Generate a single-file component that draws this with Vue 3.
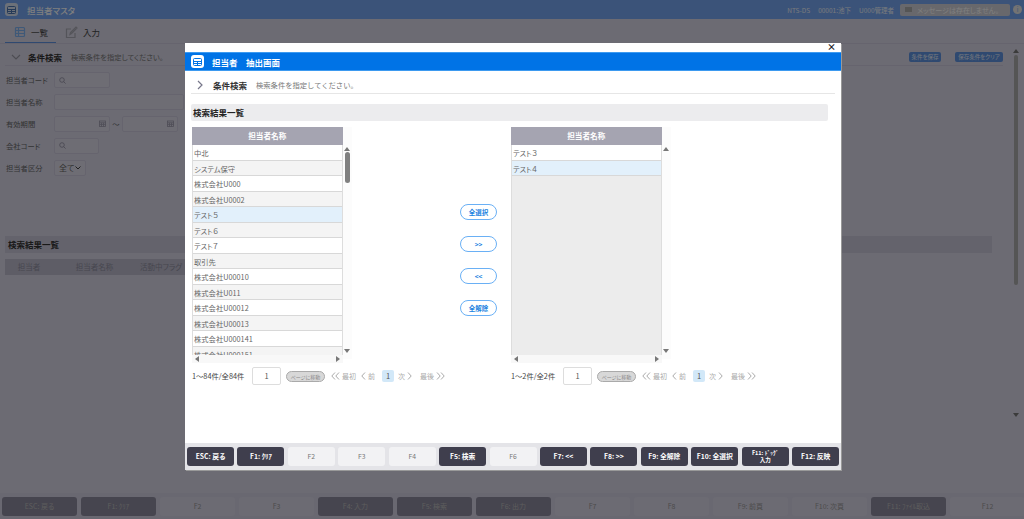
<script setup>
const formRows = [
  { label: '担当者コード', type: 'search', width: 56 },
  { label: '担当者名称', type: 'text', width: 130 },
  { label: '有効期間', type: 'date' },
  { label: '会社コード', type: 'search', width: 45 },
  { label: '担当者区分', type: 'select' }
]

const pageKeys = [
  { label: 'ESC: 戻る', on: true },
  { label: 'F1: ｸﾘｱ', on: true },
  { label: 'F2' },
  { label: 'F3' },
  { label: 'F4: 入力', on: true },
  { label: 'F5: 検索', on: true },
  { label: 'F6: 出力', on: true },
  { label: 'F7' },
  { label: 'F8' },
  { label: 'F9: 前頁' },
  { label: 'F10: 次頁' },
  { label: 'F11: ﾌｧｲﾙ取込', on: true },
  { label: 'F12' }
]

const modalKeys = [
  { label: 'ESC: 戻る', on: true },
  { label: 'F1: ｸﾘｱ', on: true },
  { label: 'F2' },
  { label: 'F3' },
  { label: 'F4' },
  { label: 'F5: 検索', on: true },
  { label: 'F6' },
  { label: 'F7: <<', on: true },
  { label: 'F8: >>', on: true },
  { label: 'F9: 全解除', on: true },
  { label: 'F10: 全選択', on: true },
  { label: 'F11: ﾄﾞｯｸﾞ\n入力', on: true, small: true },
  { label: 'F12: 反映', on: true }
]

const leftRows = [
  '中北', 'システム保守', '株式会社U000', '株式会社U0002', 'テスト５', 'テスト６', 'テスト７', '取引先',
  '株式会社U00010', '株式会社U011', '株式会社U00012', '株式会社U00013', '株式会社U000141', '株式会社U000151'
]
const rightRows = ['テスト３', 'テスト４']
const moveButtons = ['全選択', '>>', '<<', '全解除']
const lists = [
  { rows: leftRows, selected: 'テスト５', count: '1～84件/全84件', thumb: true },
  { rows: rightRows, selected: 'テスト４', count: '1～2件/全2件', thumb: false }
]
</script>

<template>
  <div class="screen">
    <!-- 背面の画面 -->
    <div class="page">
      <header class="top-bar">
        <span class="app-icon dim">
          <svg width="9" height="8" viewBox="0 0 9 8" fill="none" stroke="#4a74b0">
            <rect x="0.5" y="0.5" width="8" height="7" rx="1" />
            <path d="M0.5 3.500h8M0.5 5.500h8M4.500 3.500v4" />
          </svg>
        </span>
        <span class="top-title">担当者マスタ</span>
        <span class="top-info first">NTS-DS</span>
        <span class="top-info">00001:池下</span>
        <span class="top-info">U000管理者</span>
        <span class="message-box"><i class="msg-mark"></i>メッセージは存在しません。</span>
        <span class="info-dot">i</span>
      </header>

      <nav class="tabs">
        <span class="tab active">
          <svg width="12" height="12" viewBox="0 0 12 12" fill="none" stroke="#7fb2f0" stroke-width="1.2">
            <rect x="1.500" y="1.500" width="9" height="9" rx="1" />
            <path d="M4.500 1.500v9M1.500 4.500h9M1.500 7.500h9" />
          </svg>
          一覧
        </span>
        <span class="tab">
          <svg width="13" height="13" viewBox="0 0 13 13" fill="none" stroke="#a9a9b4" stroke-width="1.2">
            <path d="M10 7v4.500H1.500V3H6" />
            <path d="M5 8.500l.5-2L11 1l1 1-5.500 5.500z" />
          </svg>
          入力
        </span>
      </nav>

      <div class="main-area">
        <div class="cond-head">
          <svg width="10" height="6" viewBox="0 0 10 6" fill="none" stroke="#9a9aa6" stroke-width="1.100">
            <path d="M1 1l4 4 4-4" />
          </svg>
          <b>条件検索</b>
          <span class="cond-note">検索条件を指定してください。</span>
          <span class="save-btn first">条件を保存</span>
          <span class="save-btn wide">保存条件をクリア</span>
        </div>

        <div class="form">
          <div v-for="row in formRows" :key="row.label" class="form-row">
            <label>{{ row.label }}</label>
            <template v-if="row.type === 'date'">
              <span v-for="n in 2" :key="n" class="date-wrap">
                <span v-if="n === 2" class="tilde">～</span>
                <span class="field date">
                  <svg width="7" height="7" viewBox="0 0 7 7" fill="none" stroke="#9c9aac" stroke-width="0.800">
                    <rect x="0.500" y="1" width="6" height="5.500" />
                    <path d="M0.500 2.800h6M2.500 2.800v3.700M4.500 2.800v3.700M0.500 4.600h6" />
                  </svg>
                </span>
              </span>
            </template>
            <span v-else-if="row.type === 'select'" class="field select">
              全て
              <svg width="6" height="4" viewBox="0 0 6 4" fill="none" stroke="#444" stroke-width="1">
                <path d="M0.500 0.500L3 3l2.500-2.500" />
              </svg>
            </span>
            <span v-else class="field search" :style="{ width: row.width + 'px' }">
              <svg v-if="row.type === 'search'" width="7" height="7" viewBox="0 0 7 7" fill="none" stroke="#8e8ca0" stroke-width="0.800">
                <circle cx="3" cy="3" r="2.300" />
                <path d="M4.700 4.700L6.600 6.600" />
              </svg>
            </span>
          </div>
        </div>

        <div class="result-head">検索結果一覧</div>
        <div class="result-cols">
          <span style="width: 48px">担当者</span>
          <span style="width: 83px">担当者名称</span>
          <span style="width: 50px">活動中フラグ</span>
        </div>

        <div class="page-scroll">
          <i class="tri-up"></i>
          <i class="page-thumb"></i>
          <i class="tri-down"></i>
        </div>
      </div>

      <footer class="page-keys">
        <span
          v-for="key in pageKeys"
          :key="key.label"
          class="page-key"
          :class="{ on: key.on }"
        >{{ key.label }}</span>
      </footer>
    </div>

    <div class="overlay"></div>

    <!-- 抽出画面 -->
    <section class="modal">
      <div class="modal-close"><span>×</span></div>
      <div class="modal-title">
        <span class="app-icon">
          <svg width="9" height="8" viewBox="0 0 9 8" fill="none" stroke="#0073e6">
            <rect x="0.500" y="0.500" width="8" height="7" rx="1" />
            <path d="M0.500 3.500h8M0.500 5.500h8M4.500 3.500v4" />
          </svg>
        </span>
        担当者　抽出画面
      </div>

      <div class="modal-body">
        <div class="modal-cond">
          <svg width="6" height="10" viewBox="0 0 6 10" fill="none" stroke="#77778a" stroke-width="1.200">
            <path d="M1 1l4 4-4 4" />
          </svg>
          <b>条件検索</b>
          <span>検索条件を指定してください。</span>
        </div>

        <div class="modal-section">検索結果一覧</div>

        <div class="columns">
          <template v-for="(list, i) in lists" :key="i">
            <div class="list-col">
              <div class="list-wrap">
                <div class="list-main">
                  <div class="list-head">担当者名称</div>
                  <div class="list-rows">
                    <div
                      v-for="row in list.rows"
                      :key="row"
                      class="list-row"
                      :class="{ selected: row === list.selected }"
                    >{{ row }}</div>
                  </div>
                  <div class="hbar"><i class="tri-left"></i><i class="tri-right"></i></div>
                </div>
                <div class="vbar">
                  <i class="tri-up"></i>
                  <i v-if="list.thumb" class="thumb"></i>
                  <i class="tri-down"></i>
                </div>
              </div>
              <div class="pager">
                <span class="count">{{ list.count }}</span>
                <span class="page-input">1</span>
                <span class="page-go">ページに移動</span>
                <span class="page-link">
                  <svg width="9" height="8" viewBox="0 0 9 8" fill="none" stroke="#aaa"><path d="M4 .5L.8 4 4 7.500M8 .5L4.800 4 8 7.500" /></svg>
                  最初
                </span>
                <span class="page-link">
                  <svg width="5" height="8" viewBox="0 0 5 8" fill="none" stroke="#aaa"><path d="M4 .5L.8 4 4 7.500" /></svg>
                  前
                </span>
                <span class="page-now">1</span>
                <span class="page-link">
                  次
                  <svg width="5" height="8" viewBox="0 0 5 8" fill="none" stroke="#aaa"><path d="M1 .5L4.200 4 1 7.500" /></svg>
                </span>
                <span class="page-link last">
                  最後
                  <svg width="9" height="8" viewBox="0 0 9 8" fill="none" stroke="#aaa"><path d="M1 .5L4.200 4 1 7.500M5 .5L8.200 4 5 7.500" /></svg>
                </span>
              </div>
            </div>
            <div v-if="i === 0" class="move-col">
              <button v-for="b in moveButtons" :key="b" class="move-btn">{{ b }}</button>
            </div>
          </template>
        </div>
      </div>

      <footer class="modal-keys">
        <span
          v-for="key in modalKeys"
          :key="key.label"
          class="modal-key"
          :class="{ on: key.on, small: key.small }"
        >{{ key.label }}</span>
      </footer>
    </section>
  </div>
</template>

<style>
html,
body {
  margin: 0;
  overflow: hidden;
}
</style>

<style scoped>
.screen {
  position: relative;
  width: 1024px;
  height: 519px;
  overflow: hidden;
  font-family: "Noto Sans CJK JP", "Noto Sans", sans-serif;
  font-feature-settings: "palt";
  color: #555;
}

.page {
  display: flex;
  flex-direction: column;
  height: 519px;
  background: #d8d6e6;
}

.overlay {
  position: absolute;
  inset: 0;
  background: rgba(0, 0, 0, 0.5);
}

/* 背面ヘッダー */
.top-bar {
  display: flex;
  align-items: center;
  height: 19px;
  padding: 0 2px 0 5px;
  background: #76a6f2;
  color: #f0f4fa;
  font-size: 7px;
}

.app-icon {
  display: inline-flex;
  align-items: center;
  justify-content: center;
  width: 13px;
  height: 13px;
  border-radius: 3px;
  background: #fff;
}

.app-icon.dim {
  background: #d9e2f2;
}

.top-title {
  margin-left: 9px;
  font-size: 8.500px;
  font-weight: 500;
  color: #fff;
}

.top-info {
  margin-left: 8px;
  font-size: 6.500px;
}

.top-info.first {
  margin-left: auto;
}

.message-box {
  display: flex;
  align-items: center;
  gap: 5px;
  width: 110px;
  height: 12px;
  margin-left: 6px;
  padding-left: 5px;
  box-sizing: border-box;
  border-radius: 2px;
  background: #d0d0d8;
  color: #fff;
  font-size: 7px;
}

.msg-mark {
  width: 7px;
  height: 5px;
  background: #aaa;
}

.info-dot {
  display: flex;
  align-items: center;
  justify-content: center;
  width: 9px;
  height: 9px;
  margin-left: 3px;
  border-radius: 50%;
  background: #e6e6e6;
  color: #76a6f2;
  font-size: 6px;
}

/* 背面タブ */
.tabs {
  display: flex;
  height: 25px;
  padding-left: 5px;
  box-sizing: border-box;
  border-bottom: 1px solid #ccc9dd;
}

.tab {
  display: flex;
  align-items: center;
  gap: 5px;
  width: 51px;
  padding: 2px 0 0 9px;
  box-sizing: border-box;
  font-size: 8.500px;
  color: #444;
}

.tab.active {
  border-bottom: 1px solid #5e93e0;
}

/* 背面メイン */
.main-area {
  position: relative;
  display: flex;
  flex: 1;
  flex-direction: column;
  min-height: 0;
  padding: 0 21px 0 5px;
}

.cond-head {
  display: flex;
  align-items: center;
  height: 22px;
  padding: 4px 0 0 6px;
  box-sizing: border-box;
  border-bottom: 1px solid #ccc9dd;
  font-size: 8.500px;
  color: #333;
}

.cond-head b {
  margin-left: 7px;
  font-weight: 700;
}

.cond-note {
  margin-left: 9px;
  font-size: 7.300px;
  color: #777;
}

.save-btn {
  width: 32px;
  margin-left: 14px;
  line-height: 10px;
  border-radius: 2px;
  background: #5e93e0;
  color: #e8eefa;
  font-size: 5.500px;
  text-align: center;
}

.save-btn.wide {
  width: 48px;
}

.save-btn.first {
  margin-left: auto;
}

.form {
  display: flex;
  flex-direction: column;
  gap: 5px;
  padding: 6px 0 0 1px;
}

.form-row {
  display: flex;
  align-items: center;
  height: 16.800px;
  font-size: 7.300px;
  color: #666;
}

.form-row label {
  width: 48px;
}

.field {
  display: flex;
  align-items: center;
  height: 16px;
  box-sizing: border-box;
  border: 1px solid #ccc9dd;
  border-radius: 2px;
  background: #dddbe9;
}

.field.search {
  padding-left: 4px;
}

.date-wrap {
  display: flex;
  align-items: center;
}

.field.date {
  justify-content: flex-end;
  width: 56px;
  padding-right: 3px;
}

.tilde {
  width: 12px;
  text-align: center;
}

.field.select {
  justify-content: space-between;
  width: 32px;
  padding: 0 4px;
  font-size: 8px;
  white-space: nowrap;
}

.result-head {
  margin: 60px 11px 0 0;
  padding-left: 3px;
  line-height: 17px;
  background: #c8c6d8;
  color: #333;
  font-size: 8.500px;
  font-weight: 700;
}

.result-cols {
  display: flex;
  width: 300px;
  height: 16px;
  margin-top: 6px;
  background: #bcbacc;
  color: #8e8ea0;
  font-size: 7.500px;
  line-height: 16px;
  text-align: center;
}

.page-scroll {
  position: absolute;
  top: 5px;
  right: 4px;
  display: flex;
  flex-direction: column;
  align-items: center;
  width: 8px;
  height: 374px;
}

.page-thumb {
  width: 4px;
  height: 230px;
  margin-top: 2px;
  border-radius: 2px;
  background: #aaa;
}

.page-keys {
  display: flex;
  gap: 4px;
  height: 26px;
  margin-top: auto;
  padding: 4px 2px 3px;
  box-sizing: border-box;
  background: #d2d0e2;
}

.page-key {
  width: 75px;
  flex: none;
  border-radius: 3px;
  background: #d8d6e6;
  color: #999;
  font-size: 7px;
  line-height: 19px;
  text-align: center;
}

.page-key.on {
  background: #8c8a9e;
  color: #bbb;
}

/* 抽出画面 */
.modal {
  position: absolute;
  top: 43px;
  left: 185px;
  display: flex;
  flex-direction: column;
  width: 656px;
  height: 427px;
  background: #fff;
  box-shadow: 1px 1px 0 #999;
}

.modal-close {
  display: flex;
  justify-content: flex-end;
  height: 9px;
  padding-right: 5px;
  color: #222;
  font-size: 9px;
  font-weight: 700;
  line-height: 8px;
}

.modal-title {
  display: flex;
  align-items: center;
  gap: 8px;
  height: 19px;
  box-sizing: border-box;
  padding-left: 6px;
  border-top: 1px solid #3d9af0;
  border-bottom: 1px solid #3d9af0;
  background: #0073e6;
  color: #fff;
  font-size: 8.500px;
  font-weight: 700;
  font-feature-settings: normal;
}

.modal-body {
  flex: 1;
  min-height: 0;
  padding: 0 6px;
}

.modal-cond {
  display: flex;
  align-items: center;
  height: 23px;
  padding: 6px 0 0 6px;
  box-sizing: border-box;
  border-bottom: 1px solid #e6e6e6;
  color: #333;
  font-size: 8.500px;
}

.modal-cond b {
  margin-left: 10px;
  font-weight: 700;
  font-feature-settings: normal;
}

.modal-cond span {
  margin-left: 9px;
  font-size: 7.300px;
  color: #777;
  font-feature-settings: normal;
}

.modal-section {
  height: 17px;
  margin: 10px 7px 0 0;
  padding-left: 2px;
  border-radius: 2px;
  background: #ececee;
  color: #222;
  font-size: 8.500px;
  font-weight: 700;
  line-height: 17px;
  font-feature-settings: normal;
}

.columns {
  display: flex;
  margin-top: 6px;
  padding-left: 1px;
}

.list-col {
  width: 275px;
}

.list-wrap {
  display: flex;
  height: 236px;
}

.list-main {
  display: flex;
  flex-direction: column;
  width: 150.500px;
  height: 236px;
  border-radius: 2px;
  background: #f8f8f8;
}

.list-head {
  flex: none;
  height: 18px;
  background: #a5a4b1;
  color: #fff;
  font-size: 7.600px;
  font-weight: 700;
  line-height: 18px;
  text-align: center;
  font-feature-settings: normal;
}

.list-rows {
  flex: 1;
  min-height: 0;
  overflow: hidden;
  background: #ececec;
  border-left: 1px solid #ddd;
  border-right: 1px solid #ddd;
}

.list-row {
  height: 15.500px;
  box-sizing: border-box;
  padding-left: 1px;
  border-bottom: 1px solid #d8d8d8;
  background: #fff;
  color: #666;
  font-size: 7.300px;
  line-height: 16px;
}

.list-row:nth-child(even) {
  background: #f4f4f4;
}

.list-row.selected {
  background: #e2f0fb;
}

.hbar {
  display: flex;
  flex: none;
  align-items: center;
  justify-content: space-between;
  height: 8px;
  padding: 0 3px;
  background: #f8f8f8;
}

.vbar {
  display: flex;
  flex-direction: column;
  align-items: center;
  width: 9px;
  height: 232px;
  padding-top: 20px;
  box-sizing: border-box;
  background: #fcfcfc;
}

.tri-up,
.tri-down {
  width: 0;
  height: 0;
  border-left: 3px solid transparent;
  border-right: 3px solid transparent;
}

.tri-up {
  border-bottom: 4px solid #777;
}

.tri-down {
  margin-top: auto;
  margin-bottom: 6px;
  border-top: 4px solid #777;
}

.tri-left,
.tri-right {
  width: 0;
  height: 0;
  border-top: 3px solid transparent;
  border-bottom: 3px solid transparent;
}

.tri-left {
  border-right: 4px solid #777;
}

.tri-right {
  border-left: 4px solid #777;
}

.thumb {
  width: 5px;
  height: 31px;
  margin-top: 1px;
  border-radius: 3px;
  background: #808080;
}

.pager {
  display: flex;
  align-items: center;
  height: 18px;
  margin-top: 4px;
  color: #aaa;
  font-size: 7px;
  white-space: nowrap;
}

.count {
  width: 60px;
  color: #444;
  font-size: 7.300px;
}

.list-col:last-child .count {
  width: 52px;
}

.page-input {
  width: 29px;
  height: 18px;
  box-sizing: border-box;
  border: 1px solid #ddd;
  border-radius: 2px;
  color: #555;
  font-size: 7.500px;
  line-height: 16px;
  text-align: center;
}

.page-go {
  width: 39px;
  height: 11px;
  margin: 0 6px 0 5px;
  box-sizing: border-box;
  border: 1px solid #aaa;
  border-radius: 6px;
  background: #d8d8d8;
  color: #888;
  font-size: 5px;
  line-height: 9px;
  text-align: center;
}

.page-link {
  display: flex;
  align-items: center;
  gap: 2px;
  margin-right: 5px;
}

.page-link.last {
  margin-left: 3px;
  margin-right: 0;
}

.page-now {
  width: 12px;
  height: 12px;
  margin: 0 4px 0 2px;
  border-radius: 2px;
  background: #d2e8f8;
  color: #555;
  font-size: 7.500px;
  line-height: 12px;
  text-align: center;
}

.move-col {
  display: flex;
  flex-direction: column;
  align-items: flex-start;
  gap: 16px;
  width: 51px;
  margin-left: -7px;
  padding-top: 77px;
}

.move-btn {
  display: block;
  width: 37px;
  height: 16px;
  padding: 0;
  border: 1px solid #6ab0f5;
  border-radius: 8px;
  background: #fff;
  color: #1a7fe0;
  font-family: inherit;
  font-size: 6.500px;
  font-weight: 700;
  line-height: 14px;
}

.modal-keys {
  display: flex;
  gap: 3.400px;
  height: 27px;
  padding: 4px 2px;
  box-sizing: border-box;
  background: #e4e4e8;
}

.modal-key {
  display: flex;
  flex: 1;
  align-items: center;
  justify-content: center;
  border-radius: 3px;
  background: #f2f2f4;
  color: #777;
  font-size: 6.800px;
  line-height: 1.2;
  text-align: center;
  white-space: pre-line;
}

.modal-key.on {
  background: #3f3e4d;
  color: #fff;
  font-weight: 700;
}

.modal-key.small {
  font-size: 5.500px;
}
</style>
